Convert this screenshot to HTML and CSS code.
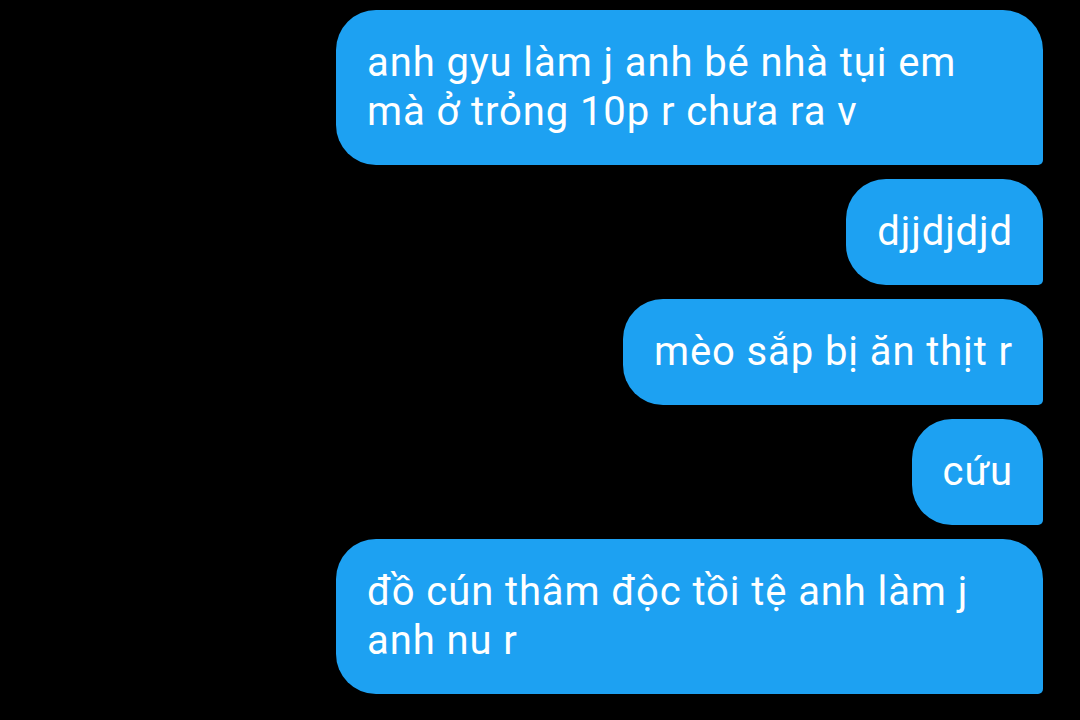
FILE: index.html
```html
<!DOCTYPE html>
<html lang="vi">
<head>
<meta charset="utf-8">
<link rel="stylesheet" href="styles.css">
</head>
<body>
<div class="thread">
  <div class="bubble">anh gyu làm j anh bé nhà tụi em mà ở trỏng 10p r chưa ra v</div>
  <div class="bubble">djjdjdjd</div>
  <div class="bubble">mèo sắp bị ăn thịt r</div>
  <div class="bubble">cứu</div>
  <div class="bubble">đồ cún thâm độc tồi tệ anh làm j anh nu r</div>
</div>
</body>
</html>
```
FILE: styles.css
```css
html, body {
  margin: 0;
  padding: 0;
  background: #000;
  width: 1080px;
  height: 720px;
  overflow: hidden;
}
.thread {
  display: flex;
  flex-direction: column;
  align-items: flex-end;
  gap: 14px;
  padding: 10px 37px 0 0;
}
.bubble {
  box-sizing: border-box;
  max-width: 707px;
  background: #1da1f2;
  color: #fff;
  font-family: Roboto, "Noto Sans", sans-serif;
  font-size: 40px;
  letter-spacing: 0.9px;
  line-height: 49px;
  padding: 28px 30px 29px 31px;
  border-radius: 40px 40px 5px 40px;
}
```
